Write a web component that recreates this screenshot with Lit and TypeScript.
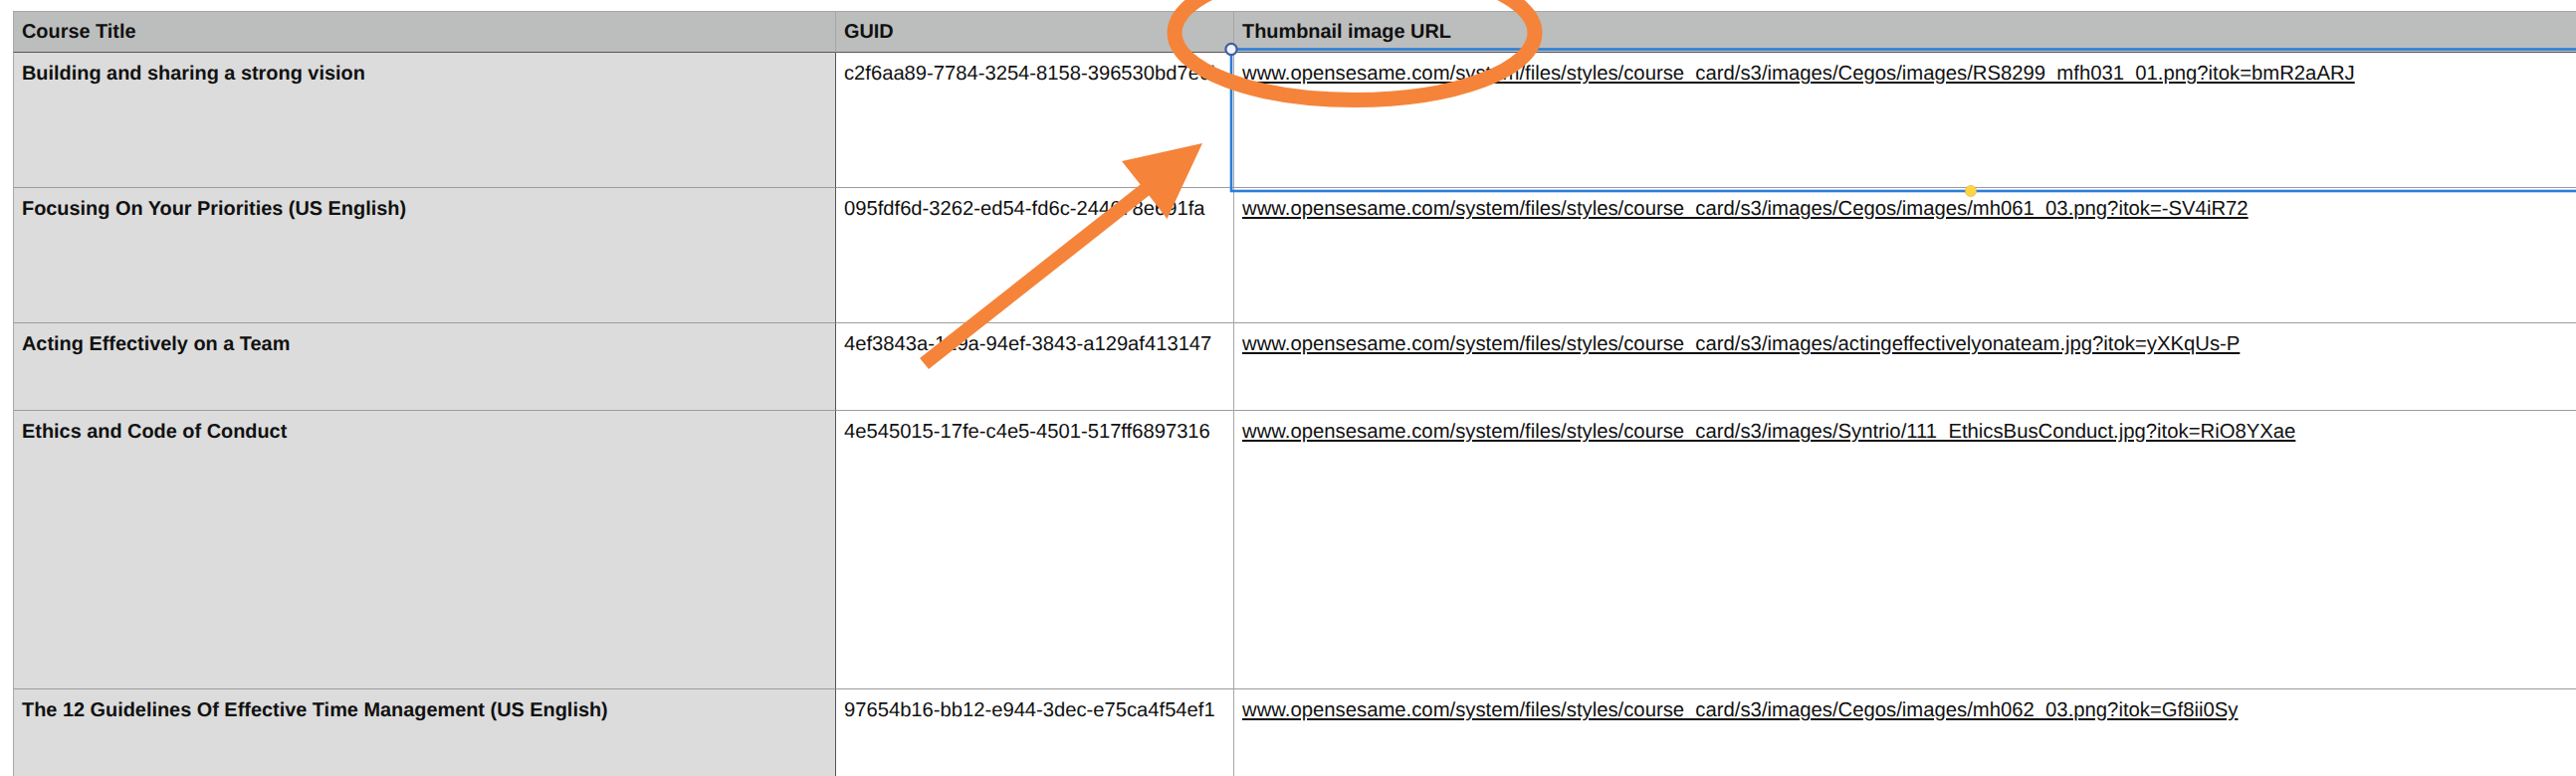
import { LitElement, html, css, svg } from "lit";
import { customElement } from "lit/decorators.js";

interface Row { title: string; guid: string; url: string; height: number; }

const BASE = "www.opensesame.com/system/files/styles/course_card/s3/images/";
const ROWS: Row[] = [
  { title: "Building and sharing a strong vision", guid: "c2f6aa89-7784-3254-8158-396530bd7e0b", url: BASE + "Cegos/images/RS8299_mfh031_01.png?itok=bmR2aARJ", height: 136 },
  { title: "Focusing On Your Priorities (US English)", guid: "095fdf6d-3262-ed54-fd6c-244678e691fa", url: BASE + "Cegos/images/mh061_03.png?itok=-SV4iR72", height: 136 },
  { title: "Acting Effectively on a Team", guid: "4ef3843a-129a-94ef-3843-a129af413147", url: BASE + "actingeffectivelyonateam.jpg?itok=yXKqUs-P", height: 88 },
  { title: "Ethics and Code of Conduct", guid: "4e545015-17fe-c4e5-4501-517ff6897316", url: BASE + "Syntrio/111_EthicsBusConduct.jpg?itok=RiO8YXae", height: 280 },
  { title: "The 12 Guidelines Of Effective Time Management (US English)", guid: "97654b16-bb12-e944-3dec-e75ca4f54ef1", url: BASE + "Cegos/images/mh062_03.png?itok=Gf8ii0Sy", height: 88 },
];

@customElement("app-root")
export class AppRoot extends LitElement {
  static styles = css`
    :host {
      display: block;
      position: relative;
      width: 2588px;
      height: 780px;
      overflow: hidden;
      background: #fff;
      font-family: "Liberation Sans", Arial, Helvetica, sans-serif;
      color: #111;
      text-rendering: geometricPrecision;
    }
    .sheet { padding: 11px 0 0 13px; }
    .row {
      display: grid;
      grid-template-columns: 826px 400px 1349px;
    }
    .cell {
      box-sizing: border-box;
      padding: 9px 8px 0;
      border-bottom: 1px solid #9c9c9c;
      line-height: 24px;
      white-space: nowrap;
      overflow: hidden;
    }
    .title { background: #dcdcdc; font-weight: 700; font-size: 19.9px; border-left: 1px solid #a8a8a8; }
    .guid { border-left: 1px solid #555; font-size: 20.2px; }
    .url { border-left: 1px solid #a8a8a8; font-size: 20.3px; text-decoration: underline; }
    .head .cell {
      height: 42px;
      padding-top: 8px;
      background: #bcbebd;
      font-size: 19.9px;
      font-weight: 700;
      border-top: 1px solid #a5a5a5;
      border-bottom: 1px solid #555;
    }
    .head .guid, .head .url { border-left: 1px solid #a5a5a5; text-decoration: none; }
    .overlay { position: absolute; left: 0; top: 0; width: 2588px; height: 780px; pointer-events: none; }
  `;

  private overlay() {
    return svg`
      <rect x="1237" y="49.5" width="1360" height="142.5" fill="none" stroke="#2b7dd8" stroke-width="2.6"/>
      <circle cx="1237" cy="49.5" r="5.6" fill="#f2f3f7" stroke="#3d5ea8" stroke-width="2.2"/>
      <circle cx="1980" cy="192" r="5.6" fill="#ffd444" stroke="#e0b030" stroke-width="0.6"/>
      <ellipse cx="1361" cy="33" rx="181" ry="67.5" fill="none" stroke="#f5843a" stroke-width="15"/>
      <polygon points="924,360 1145.6,185.4 1127,162 1208,144 1172.5,220 1154.4,196.6 933,371" fill="#f5843a"/>
    `;
  }

  render() {
    return html`
      <div class="sheet">
        <div class="row head">
          <div class="cell title">Course Title</div>
          <div class="cell guid">GUID</div>
          <div class="cell url">Thumbnail image URL</div>
        </div>
        ${ROWS.map(
          (r) => html`
            <div class="row" style="height:${r.height}px">
              <div class="cell title">${r.title}</div>
              <div class="cell guid">${r.guid}</div>
              <div class="cell url">${r.url}</div>
            </div>
          `
        )}
      </div>
      <svg class="overlay" viewBox="0 0 2588 780">${this.overlay()}</svg>
    `;
  }
}
